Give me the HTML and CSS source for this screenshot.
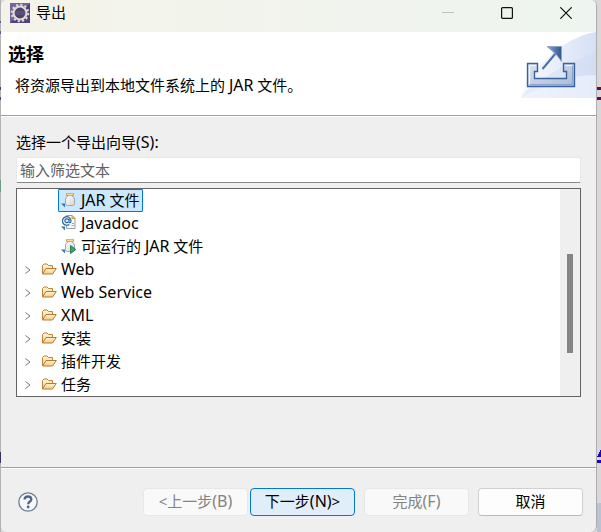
FILE: index.html
```html
<!DOCTYPE html>
<html lang="zh-CN">
<head>
<meta charset="utf-8">
<meta name="viewport" content="width=device-width, initial-scale=1">
<title>导出</title>
<link rel="stylesheet" href="styles.css">
</head>
<body>
<svg class="defs" aria-hidden="true">
  <defs>
    <linearGradient id="gold" x1="0" y1="0" x2="0" y2="1"><stop offset="0" stop-color="#fff6d8"/><stop offset="1" stop-color="#f3cb7e"/></linearGradient>
    <linearGradient id="glass" x1="0" y1="0" x2="1" y2="1"><stop offset="0" stop-color="#fff"/><stop offset="1" stop-color="#d9d6d2"/></linearGradient>
    <linearGradient id="steel" x1="0" y1="0" x2="1" y2="1"><stop offset="0" stop-color="#dce4f2"/><stop offset="1" stop-color="#a9b9d8"/></linearGradient>
    <linearGradient id="arrow" x1="0" y1="0" x2="1" y2="0"><stop offset="0" stop-color="#8fa8cf"/><stop offset="1" stop-color="#2f5590"/></linearGradient>
    <linearGradient id="wave" x1="0" y1="0" x2="1" y2="0"><stop offset="0" stop-color="#f8faff"/><stop offset="1" stop-color="#d6e0f5"/></linearGradient>
    <symbol id="folder" viewBox="0 0 16 16">
      <path d="M1.500 13V4.500L3 3H6L7.500 4.500H11.500V7" fill="url(#gold)" stroke="#bd853f"/>
      <path d="M1.500 13L5 7.500H15.300L11.500 13Z" fill="url(#gold)" stroke="#b57a35" stroke-linejoin="round"/>
    </symbol>
    <symbol id="jar" viewBox="0 0 16 16">
      <path d="M0 11.500H4V15.500Z" fill="#2f78b0"/>
      <path d="M6.500 3V4.500Q4.500 5.500 4.500 7V11.500Q4.500 13.500 6.500 13.500H11.500Q13.500 13.500 13.500 11.500V7Q13.500 5.500 11.500 4.500V3Z" fill="url(#glass)" stroke="#a5a2a8"/>
      <path d="M5 2.500H13" stroke="#d49a38" stroke-width="2.400"/><path d="M6 2.500H12" stroke="#fae39a"/>
    </symbol>
    <symbol id="javadoc" viewBox="0 0 16 16">
      <path d="M0 11.500H4V15.500Z" fill="#2f78b0"/>
      <path d="M5.500 .5H11L14 3.500V13.500H5.500Z" fill="#f7f8fd" stroke="#999eae"/>
      <path d="M11 .5V3.500H14Z" fill="#f3d18b" stroke="#c79b52"/>
      <path d="M10.500 10.500H13M11 8.500H13" stroke="#9babd0"/>
      <circle cx="5.800" cy="5.800" r="4.800" fill="#e9f2fa"/>
      <path d="M8.300 9.400A4.300 4.300 0 1 1 10 5.500Q10 8 8.700 7.700Q7.800 7.500 8 6V4M7.700 5.500A1.900 1.900 0 1 0 7.200 7" fill="none" stroke="#2b6699" stroke-width="1.200"/>
    </symbol>
  </defs>
</svg>
<div class="desktop">
  <div class="dialog" role="dialog" aria-labelledby="window-title">
    <div class="titlebar">
      <svg class="app-icon" viewBox="0 0 20 20" aria-hidden="true">
        <rect width="20" height="20" fill="#51417d"/>
        <path d="M0 0H20L0 20Z" fill="#77629a"/>
        <circle cx="10" cy="10" r="8.300" fill="none" stroke="#dcd8d6" stroke-width="2" stroke-dasharray="2.200 2.150"/>
        <circle cx="10" cy="10" r="6.500" fill="#4c426b" stroke="#dedbd8" stroke-width="2.200"/>
        <path d="M5 9H15M5 11H15" stroke="#746c91" stroke-width=".7"/>
      </svg>
      <span class="window-title" id="window-title">导出</span>
      <div class="window-controls">
        <button type="button" class="window-button" aria-label="最小化" disabled><svg viewBox="0 0 12 12"><path d="M0 5.500H12" stroke="#bfc4c0"/></svg></button>
        <button type="button" class="window-button" aria-label="最大化"><svg viewBox="0 0 12 12"><rect x=".6" y=".6" width="10.800" height="10.800" rx="1" fill="none" stroke="#111" stroke-width="1.200"/></svg></button>
        <button type="button" class="window-button" aria-label="关闭"><svg viewBox="0 0 12 12"><path d="M.3.3L11.700 11.700M11.700.3L.3 11.700" stroke="#111" stroke-width="1.200"/></svg></button>
      </div>
    </div>
    <header class="banner">
      <div class="banner-text">
        <h1>选择</h1>
        <p>将资源导出到本地文件系统上的 <span class="latin">JAR</span> 文件。</p>
      </div>
      <svg class="banner-art" viewBox="0 0 75 66" aria-hidden="true">
        <path d="M0 66Q3 44 28 25Q50 4 75 0V66Z" fill="url(#wave)"/>
        <path d="M25 45Q50 28 75 21V66H0Q7 54 25 45Z" fill="#cbd8f2" opacity=".35"/>
        <path d="M0 66Q34 44 75 43V66Z" fill="#f5f8ff" opacity=".55"/>
        <path d="M6.500 31.500H16.500V39.500H13.500V46.500H45.500V39.500H42.500V31.500H53.500V54.500H6.500Z" fill="url(#steel)" stroke="#3c629c" stroke-width="1.400"/>
        <path d="M8.500 52V33.500H15M44.500 33.500H51" fill="none" stroke="#f5f8fd"/>
        <path d="M9 52.500H51.500V34" fill="none" stroke="#8ba2cb"/>
        <path d="M21.500 37L35 21" stroke="#4b6ea7" stroke-width="2"/>
        <path d="M26 14.500H40.500V29.500L36.500 24L32 19.500Z" fill="url(#arrow)" stroke="#8da5cc"/>
      </svg>
    </header>
    <main class="content">
      <label class="prompt" for="filter">选择一个导出向导<span class="latin">(S):</span></label>
      <input class="filter" id="filter" type="text" placeholder="输入筛选文本">
      <div class="tree-frame">
        <ul class="tree" role="tree" aria-label="导出向导">
          <li class="row child" role="treeitem" aria-selected="true"><span class="item selected"><svg class="icon" aria-hidden="true"><use href="#jar"/></svg><span><span class="latin">JAR</span> 文件</span></span></li>
          <li class="row child" role="treeitem"><span class="item"><svg class="icon" aria-hidden="true"><use href="#javadoc"/></svg><span class="latin">Javadoc</span></span></li>
          <li class="row child" role="treeitem"><span class="item"><svg class="icon" viewBox="0 0 16 16" aria-hidden="true"><use href="#jar"/><path d="M9.500 7.500L14.800 11.500L9.500 15.500Z" fill="#39a568" stroke="#248451"/></svg><span>可运行的 <span class="latin">JAR</span> 文件</span></span></li>
          <li class="row" role="treeitem" aria-expanded="false"><svg class="chevron" viewBox="0 0 6 8"><path d="M.5.5L5 4L.5 7.500"/></svg><span class="item"><svg class="icon" aria-hidden="true"><use href="#folder"/></svg><span class="latin">Web</span></span></li>
          <li class="row" role="treeitem" aria-expanded="false"><svg class="chevron" viewBox="0 0 6 8"><path d="M.5.5L5 4L.5 7.500"/></svg><span class="item"><svg class="icon" aria-hidden="true"><use href="#folder"/></svg><span class="latin">Web Service</span></span></li>
          <li class="row" role="treeitem" aria-expanded="false"><svg class="chevron" viewBox="0 0 6 8"><path d="M.5.5L5 4L.5 7.500"/></svg><span class="item"><svg class="icon" aria-hidden="true"><use href="#folder"/></svg><span class="latin">XML</span></span></li>
          <li class="row" role="treeitem" aria-expanded="false"><svg class="chevron" viewBox="0 0 6 8"><path d="M.5.5L5 4L.5 7.500"/></svg><span class="item"><svg class="icon" aria-hidden="true"><use href="#folder"/></svg>安装</span></li>
          <li class="row" role="treeitem" aria-expanded="false"><svg class="chevron" viewBox="0 0 6 8"><path d="M.5.5L5 4L.5 7.500"/></svg><span class="item"><svg class="icon" aria-hidden="true"><use href="#folder"/></svg>插件开发</span></li>
          <li class="row" role="treeitem" aria-expanded="false"><svg class="chevron" viewBox="0 0 6 8"><path d="M.5.5L5 4L.5 7.500"/></svg><span class="item"><svg class="icon" aria-hidden="true"><use href="#folder"/></svg>任务</span></li>
        </ul>
        <div class="scrollbar"><div class="thumb"></div></div>
      </div>
    </main>
    <footer class="actions">
      <button type="button" class="help" aria-label="帮助">
        <svg viewBox="0 0 20 20"><circle cx="10" cy="10" r="9.200" fill="#f6f8fa" stroke="#687c98" stroke-width="1.300"/><path d="M6.600 7.500Q6.800 4.500 10 4.500Q13.300 4.500 13.300 7.200Q13.300 8.700 11.600 9.800Q10.200 10.700 10.200 12.300" fill="none" stroke="#506583" stroke-width="2.300"/><circle cx="10.200" cy="15" r="1.400" fill="#506583"/></svg>
      </button>
      <div class="steps">
        <button type="button" class="button" disabled>&lt;上一步<span class="latin">(B)</span></button>
        <button type="button" class="button primary">下一步<span class="latin">(N)</span>&gt;</button>
      </div>
      <button type="button" class="button" disabled>完成<span class="latin">(F)</span></button>
      <button type="button" class="button">取消</button>
    </footer>
  </div>
</div>
</body>
</html>
```
FILE: styles.css
```css
* {
  box-sizing: border-box;
}

body {
  margin: 0;
  font: 15px/20px "Noto Sans", "Noto Sans CJK SC", sans-serif;
  color: #000;
}

button,
input {
  font: inherit;
  color: inherit;
}

/* Latin runs are set one step larger than the Chinese text around them */
.latin {
  font-size: 16px;
}

.defs {
  position: absolute;
  width: 0;
  height: 0;
}

/* Editor edges that show on both sides of the dialog */
.desktop {
  display: flex;
  min-height: 100vh;
  padding: 0 4px 0 1px;
  background:
    linear-gradient(#720060, #720060) right 87px / 4px 3px no-repeat,
    linear-gradient(#720060, #720060) right 97px / 4px 3px no-repeat,
    linear-gradient(#2000c8, #2000c8) right 460px / 4px 3px no-repeat,
    linear-gradient(120deg, transparent 50%, #2000c8 50%) right 449px / 4px 8px no-repeat,
    linear-gradient(#b9c3d3, #b9c3d3) right 503px / 4px 29px no-repeat,
    linear-gradient(#4c5fa0, #4c5fa0) left 21px / 1px 2px no-repeat,
    linear-gradient(#4c5fa0, #4c5fa0) left 31px / 1px 3px no-repeat,
    linear-gradient(#3a4a80, #3a4a80) left 87px / 1px 3px no-repeat,
    linear-gradient(#3a4a80, #3a4a80) left 97px / 1px 3px no-repeat,
    linear-gradient(#6c9a83, #6c9a83) left 180px / 1px 12px no-repeat,
    linear-gradient(#35355c, #35355c) left 452px / 1px 11px no-repeat,
    linear-gradient(90deg, #b3b3b3 1px, #d9d7d7 1px);
}

.dialog {
  display: flex;
  flex: 1;
  flex-direction: column;
  overflow: hidden;
  border-right: 1px solid #adadad;
  border-radius: 6px;
  background: #efefef;
}

.titlebar {
  display: flex;
  align-items: center;
  height: 32px;
  padding: 0 1px 6px 9px;
  gap: 6px;
  background: linear-gradient(90deg, #f4f3ea, #eef4ef);
}

.app-icon {
  width: 20px;
  height: 20px;
}

.window-title {
  padding-bottom: 2px;
}

.window-controls {
  display: flex;
  margin-left: auto;
}

.window-button {
  display: grid;
  place-items: center;
  width: 59px;
  height: 26px;
  padding: 0;
  border: 0;
  background: none;
}

.window-button svg {
  width: 12px;
  height: 12px;
}

.banner {
  display: flex;
  justify-content: space-between;
  height: 84px;
  border-bottom: 1px solid #a0a0a0;
  background: #fff;
}

.banner-text {
  padding: 11px 0 0 7px;
}

.banner h1 {
  margin: 0;
  font-size: 18px;
  font-weight: 700;
  line-height: 22px;
}

.banner p {
  margin: 10px 0 0 7px;
}

.banner-art {
  width: 75px;
  height: 66px;
}

.content {
  display: flex;
  flex: 1;
  flex-direction: column;
  padding: 15px;
  border-top: 1px solid #fff;
}

.prompt {
  height: 20px;
  margin-bottom: 5px;
}

.filter {
  width: 100%;
  height: 26px;
  padding: 0 3px 1px;
  border: 1px solid #e8e8e8;
  border-bottom-color: #868686;
  border-radius: 2px;
  background: #fff;
  outline: 0;
}

.filter::placeholder {
  color: #606060;
  opacity: 1;
}

.tree-frame {
  display: flex;
  margin-top: 5px;
  border: 1px solid #646464;
  background: #fff;
}

.tree {
  flex: 1;
  margin: 0;
  padding: 0;
  list-style: none;
}

.row {
  display: flex;
  align-items: center;
  height: 23px;
  padding-left: 8px;
  gap: 7px;
}

.child {
  padding-left: 41px;
}

.item {
  display: flex;
  align-items: center;
  height: 23px;
  padding: 0 3px 2px 2px;
  gap: 4px;
  border: 1px solid transparent;
}

.selected {
  border-color: #0078d4;
  border-radius: 1px;
  background: #cce8ff;
}

.icon {
  width: 16px;
  height: 16px;
}

.chevron {
  width: 6px;
  height: 8px;
  fill: none;
  stroke: #757575;
}

.scrollbar {
  width: 20px;
  padding: 65px 7px 43px;
  background: #efefef;
}

.thumb {
  height: 100%;
  background: #858585;
}

.actions {
  display: flex;
  align-items: center;
  height: 65px;
  padding: 4px 13px 0 17px;
  gap: 9px;
  border-top: 1px solid #a0a0a0;
  box-shadow: inset 0 1px #fff;
}

.help {
  width: 20px;
  height: 20px;
  margin-right: auto;
  padding: 0;
  border: 0;
  background: none;
}

.help svg {
  display: block;
}

.steps {
  display: flex;
  gap: 2px;
}

.button {
  width: 105px;
  height: 28px;
  padding: 0 0 2px;
  border: 1px solid #d0d0d0;
  border-bottom-color: #bababa;
  border-radius: 4px;
  background: #fdfdfd;
}

.button:disabled {
  border-color: #e7e7e7;
  background: #f9f9f9;
  color: #838383;
}

.primary,
.primary:enabled {
  border-color: #0078d4;
  background: #e0eef9;
}
```
